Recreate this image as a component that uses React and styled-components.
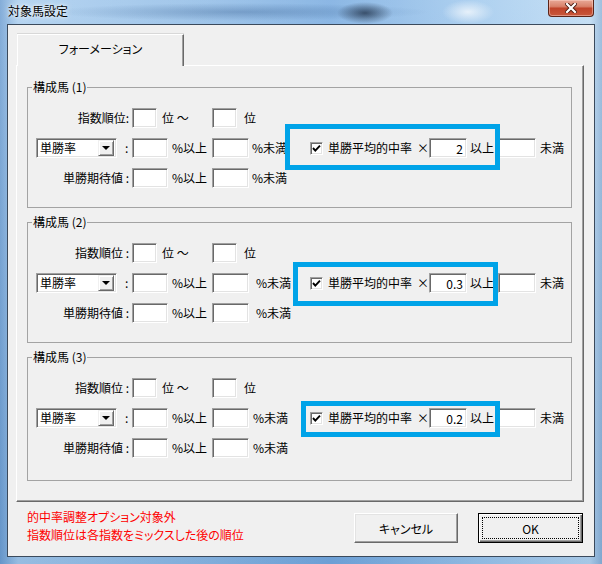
import React from "react";
import styled, { createGlobalStyle } from "styled-components";

const groups = [
  {
    id: 1,
    rankLabel: "指数順位:",
    ratio: "2",
    pad: 3,
    extra: 0,
    hl: { left: 257, top: -14, width: 215, height: 46 },
  },
  {
    id: 2,
    rankLabel: "指数順位 :",
    ratio: "0.3",
    pad: 7,
    extra: 0,
    hl: { left: 265, top: -11, width: 205, height: 44 },
  },
  {
    id: 3,
    rankLabel: "指数順位 :",
    ratio: "0.2",
    pad: 4,
    extra: 3,
    hl: { left: 273, top: -7, width: 199, height: 36 },
  },
];

const CheckMark = () => (
  <svg width="9" height="9" viewBox="0 0 9 9">
    <polyline points="1,4 3.3,6.6 8,1.6" fill="none" stroke="#000" strokeWidth="1.9" />
  </svg>
);

const CloseGlyph = () => (
  <svg width="12" height="10" viewBox="0 0 12 10">
    <path d="M2 1 L10 9 M10 1 L2 9" stroke="#4a1a10" strokeWidth="4" strokeLinecap="square" />
    <path d="M2 1 L10 9 M10 1 L2 9" stroke="#fff" strokeWidth="2.2" strokeLinecap="square" />
  </svg>
);

const RankRow = ({ label }) => (
  <Row>
    <Label>{label}</Label>
    <Field $w={25} readOnly defaultValue="" />
    <Text $w={55} $pad={5}>位 〜</Text>
    <Field $w={25} readOnly defaultValue="" />
    <Text $pad={7}>位</Text>
  </Row>
);

const Group = ({ g }) => (
  <GroupBox $extra={g.extra}>
    <Legend>構成馬 ({g.id})</Legend>
    <Rows>
      <RankRow label={g.rankLabel} />
      <Row>
        <Combo>
          <ComboText>単勝率</ComboText>
          <DropButton>
            <Arrow />
          </DropButton>
        </Combo>
        <Text $w={15} $pad={8}>:</Text>
        <Field $w={36} readOnly defaultValue="" />
        <Text $w={44} $pad={4}>%以上</Text>
        <Field $w={37} readOnly defaultValue="" />
        <Text $w={61} $pad={g.pad}>%未満</Text>
        <CheckBox>
          <CheckMark />
        </CheckBox>
        <Text $pad={5}>単勝平均的中率</Text>
        <Text $w={17} $pad={5}>×</Text>
        <Field $w={38} $right readOnly defaultValue={g.ratio} />
        <Text $w={31} $pad={3}>以上</Text>
        <Field $w={38} readOnly defaultValue="" />
        <Text $pad={4}>未満</Text>
        <Highlight
          style={{
            left: g.hl.left,
            top: g.hl.top,
            width: g.hl.width,
            height: g.hl.height,
          }}
        />
      </Row>
      <Row>
        <Label>単勝期待値 :</Label>
        <Field $w={36} readOnly defaultValue="" />
        <Text $w={44} $pad={4}>%以上</Text>
        <Field $w={37} readOnly defaultValue="" />
        <Text $pad={g.pad}>%未満</Text>
      </Row>
    </Rows>
  </GroupBox>
);

export default function App() {
  return (
    <>
      <GlobalStyle />
      <Window>
        <TitleBar>
          <Title>対象馬設定</Title>
          <CloseButton>
            <CloseGlyph />
          </CloseButton>
        </TitleBar>
        <Client>
          <TabStrip>
            <Tab>フォーメーション</Tab>
          </TabStrip>
          <TabPage>
            {groups.map((g) => (
              <Group key={g.id} g={g} />
            ))}
          </TabPage>
          <Footer>
            <Notes>
              <div>的中率調整オプション対象外</div>
              <div>指数順位は各指数をミックスした後の順位</div>
            </Notes>
            <Buttons>
              <Button>キャンセル</Button>
              <Button $default>OK</Button>
            </Buttons>
          </Footer>
        </Client>
      </Window>
    </>
  );
}

const GlobalStyle = createGlobalStyle`
  html, body {
    margin: 0;
    padding: 0;
    background: #fff;
  }
  body {
    font-family: "Noto Sans CJK JP", "Liberation Sans", sans-serif;
    font-size: 12px;
    font-feature-settings: "palt";
    color: #000;
  }
  * {
    box-sizing: border-box;
  }
`;

const Window = styled.div`
  width: 602px;
  height: 564px;
  display: flex;
  flex-direction: column;
  background:
    radial-gradient(ellipse 28px 11px at 365px 13px, rgba(38, 56, 80, 0.8), rgba(38, 56, 80, 0)),
    radial-gradient(ellipse 26px 12px at 468px 12px, rgba(255, 255, 255, 0.7), rgba(255, 255, 255, 0)),
    radial-gradient(ellipse 190px 9px at 240px 12px, rgba(50, 90, 140, 0.35), rgba(50, 90, 140, 0)),
    linear-gradient(180deg, rgba(255, 255, 255, 0.15), rgba(40, 90, 150, 0.15)),
    linear-gradient(90deg, #6f9fd2 0%, #a9cdee 3%, #8fbbe6 35%, #78abe0 55%, #a2caee 80%, #bcdaf3 98%, #8fb4d8 100%);
`;

const TitleBar = styled.div`
  height: 24px;
  display: flex;
  align-items: flex-start;
  padding: 0 8px 0 8px;
`;

const Title = styled.div`
  line-height: 22px;
  font-size: 12px;
  text-shadow: 0 0 6px rgba(255, 255, 255, 0.9), 0 0 3px rgba(255, 255, 255, 0.9);
`;

const CloseButton = styled.div`
  margin-left: auto;
  width: 46px;
  height: 17px;
  display: flex;
  align-items: center;
  justify-content: center;
  border: 1px solid #5c2418;
  border-top: none;
  border-radius: 0 0 4px 4px;
  background: linear-gradient(180deg, #e8a896 0%, #d9826b 40%, #c0442a 52%, #c8583c 100%);
  box-shadow: inset 0 0 0 1px rgba(255, 220, 210, 0.45);
`;

const Client = styled.div`
  flex: 1;
  margin: 0 7px 7px 7px;
  border: 1px solid #3b4a5c;
  background: #f0f0f0;
  display: flex;
  flex-direction: column;
  padding: 9px 10px 0 8px;
`;

const TabStrip = styled.div`
  display: flex;
  padding-left: 1px;
`;

const Tab = styled.div`
  position: relative;
  z-index: 1;
  width: 167px;
  height: 32px;
  margin-bottom: -1px;
  display: flex;
  align-items: center;
  justify-content: center;
  padding-bottom: 4px;
  background: #f0f0f0;
  border-top: 1px solid #fff;
  border-left: 1px solid #fff;
  border-right: 1px solid #696969;
  box-shadow: inset -1px 0 0 #a0a0a0, 0 -1px 0 #d8d8d8;
`;

const TabPage = styled.div`
  height: 437px;
  display: flex;
  flex-direction: column;
  gap: 7px;
  padding: 14px 11px 0 10px;
  border-top: 1px solid #fff;
  border-left: 1px solid #fff;
  border-right: 1px solid #696969;
  border-bottom: 1px solid #696969;
  box-shadow: inset -1px -1px 0 #a0a0a0;
`;

const GroupBox = styled.fieldset`
  margin: 0;
  min-width: 0;
  padding: 14px 0 ${(p) => 19 + p.$extra}px 0;
  border: 1px solid #a3a3a3;
`;

const Legend = styled.legend`
  margin-left: 4px;
  padding: 0 1px;
  line-height: 14px;
  font-size: 12px;
`;

const Rows = styled.div`
  display: flex;
  flex-direction: column;
  gap: 10px;
`;

const Row = styled.div`
  position: relative;
  height: 20px;
  display: flex;
  align-items: center;
  white-space: nowrap;
`;

const Label = styled.div`
  width: 104px;
  padding-right: 3px;
  text-align: right;
  line-height: 14px;
`;

const Text = styled.div`
  flex: none;
  width: ${(p) => (p.$w ? `${p.$w}px` : "auto")};
  padding-left: ${(p) => p.$pad || 0}px;
  line-height: 14px;
`;

const Field = styled.input`
  flex: none;
  width: ${(p) => p.$w}px;
  height: 20px;
  margin: 0;
  padding: 0 3px;
  font: inherit;
  font-size: 12px;
  text-align: ${(p) => (p.$right ? "right" : "left")};
  background: #fff;
  border-style: solid;
  border-width: 1px;
  border-color: #a0a0a0 #fff #fff #a0a0a0;
  box-shadow: inset 1px 1px 0 #696969, inset -1px -1px 0 #e3e3e3;
  outline: none;
`;

const Combo = styled.div`
  flex: none;
  width: 81px;
  height: 20px;
  margin-left: 8px;
  display: flex;
  align-items: center;
  background: #fff;
  border-style: solid;
  border-width: 1px;
  border-color: #a0a0a0 #fff #fff #a0a0a0;
  box-shadow: inset 1px 1px 0 #696969, inset -1px -1px 0 #e3e3e3;
  padding: 2px 2px 2px 3px;
`;

const ComboText = styled.div`
  flex: 1;
  line-height: 14px;
`;

const DropButton = styled.div`
  width: 16px;
  height: 16px;
  display: flex;
  align-items: center;
  justify-content: center;
  background: #f0f0f0;
  border-style: solid;
  border-width: 1px;
  border-color: #f0f0f0 #696969 #696969 #f0f0f0;
  box-shadow: inset 1px 1px 0 #fff, inset -1px -1px 0 #a0a0a0;
`;

const Arrow = styled.div`
  width: 0;
  height: 0;
  border-left: 4px solid transparent;
  border-right: 4px solid transparent;
  border-top: 4px solid #000;
`;

const CheckBox = styled.div`
  flex: none;
  width: 13px;
  height: 13px;
  display: flex;
  align-items: center;
  justify-content: center;
  background: #fff;
  border-style: solid;
  border-width: 1px;
  border-color: #a0a0a0 #fff #fff #a0a0a0;
  box-shadow: inset 1px 1px 0 #696969, inset -1px -1px 0 #e3e3e3;
`;

const Highlight = styled.div`
  position: absolute;
  border: 5px solid #00a3e8;
  pointer-events: none;
`;

const Footer = styled.div`
  flex: 1;
  display: flex;
  align-items: flex-start;
  padding: 6px 1px 0 11px;
`;

const Notes = styled.div`
  color: #f00;
  line-height: 18px;
  font-size: 12px;
`;

const Buttons = styled.div`
  margin-left: auto;
  margin-top: 5px;
  display: flex;
  gap: 20px;
`;

const Button = styled.button`
  width: ${(p) => (p.$default ? 105 : 104)}px;
  height: 30px;
  margin: 0;
  padding: 0;
  font: inherit;
  font-size: 12px;
  color: #000;
  background: #f0f0f0;
  border-style: solid;
  border-width: 1px;
  border-color: ${(p) => (p.$default ? "#000" : "#fff #696969 #696969 #fff")};
  box-shadow: ${(p) =>
    p.$default
      ? "inset 1px 1px 0 #fff, inset -1px -1px 0 #696969, inset -2px -2px 0 #a0a0a0"
      : "inset -1px -1px 0 #a0a0a0, inset 1px 1px 0 #e3e3e3"};
  outline: ${(p) => (p.$default ? "1px dotted #000" : "none")};
  outline-offset: -5px;
`;
